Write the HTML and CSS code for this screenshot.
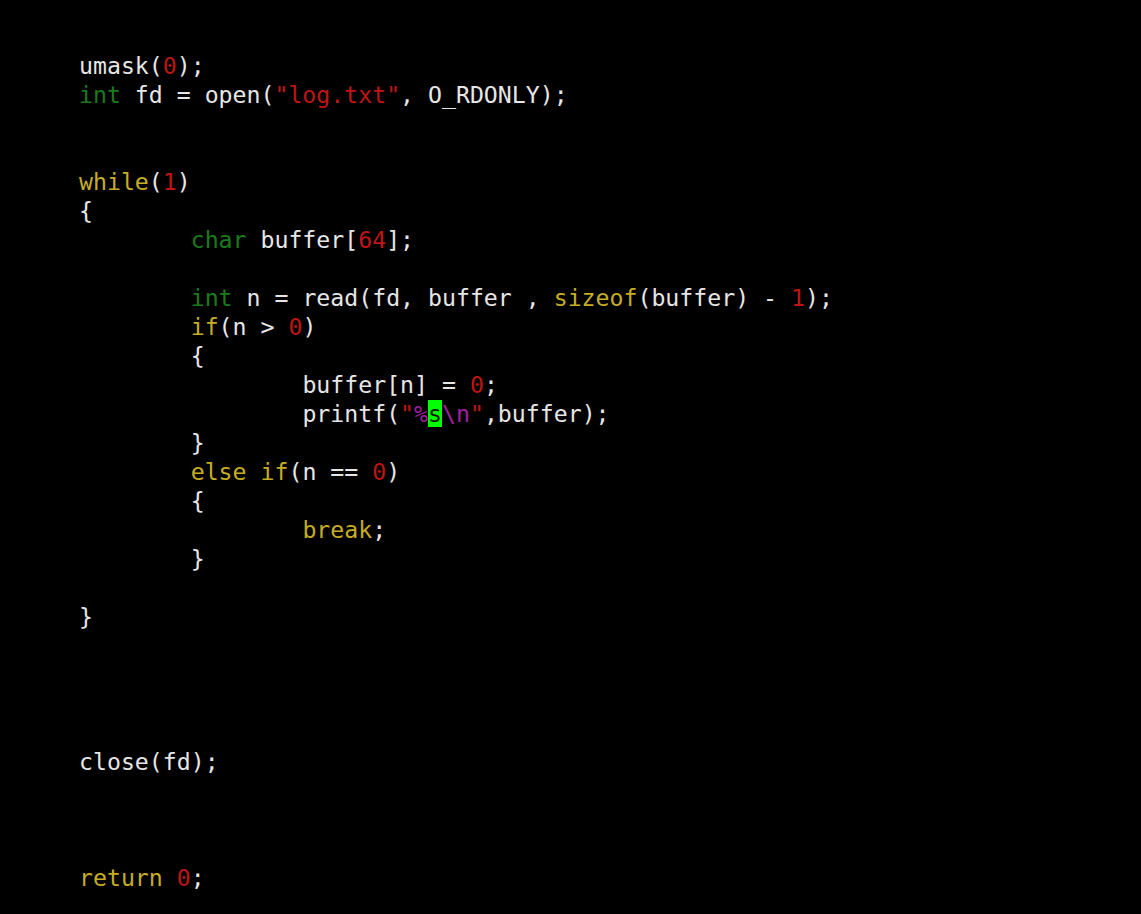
FILE: index.html
```html
<!DOCTYPE html>
<html>
<head>
<meta charset="utf-8">
<link rel="stylesheet" href="styles.css">
</head>
<body>
<pre class="code">umask(<span class="num">0</span>);
<span class="type">int</span> fd = open(<span class="str">"log.txt"</span>, O_RDONLY);


<span class="kw">while</span>(<span class="num">1</span>)
{
	<span class="type">char</span> buffer[<span class="num">64</span>];

	<span class="type">int</span> n = read(fd, buffer , <span class="kw">sizeof</span>(buffer) - <span class="num">1</span>);
	<span class="kw">if</span>(n &gt; <span class="num">0</span>)
	{
		buffer[n] = <span class="num">0</span>;
		printf(<span class="str">"</span><span class="spec">%</span><span class="cursor">s</span><span class="spec">\n</span><span class="str">"</span>,buffer);
	}
	<span class="kw">else</span> <span class="kw">if</span>(n == <span class="num">0</span>)
	{
		<span class="kw">break</span>;
	}

}




close(fd);



<span class="kw">return</span> <span class="num">0</span>;
</pre>
</body>
</html>
```
FILE: styles.css
```css
html, body {
  margin: 0;
  padding: 0;
  background: #000000;
}
body {
  width: 1141px;
  height: 914px;
  overflow: hidden;
}
.code {
  margin: 0;
  padding: 51px 0 0 79px;
  font-family: "DejaVu Sans Mono", monospace;
  font-size: 23.2px;
  line-height: 29px;
  color: #e6e6e6;
  tab-size: 8;
  -moz-tab-size: 8;
  white-space: pre;
}
.type { color: #1b7a1b; }
.kw { color: #c6ad25; }
.num { color: #bf1515; }
.str { color: #bf1515; }
.spec { color: #a020a0; }
.cursor {
  background: #00ff00;
  color: #0a1a0a;
}
```
